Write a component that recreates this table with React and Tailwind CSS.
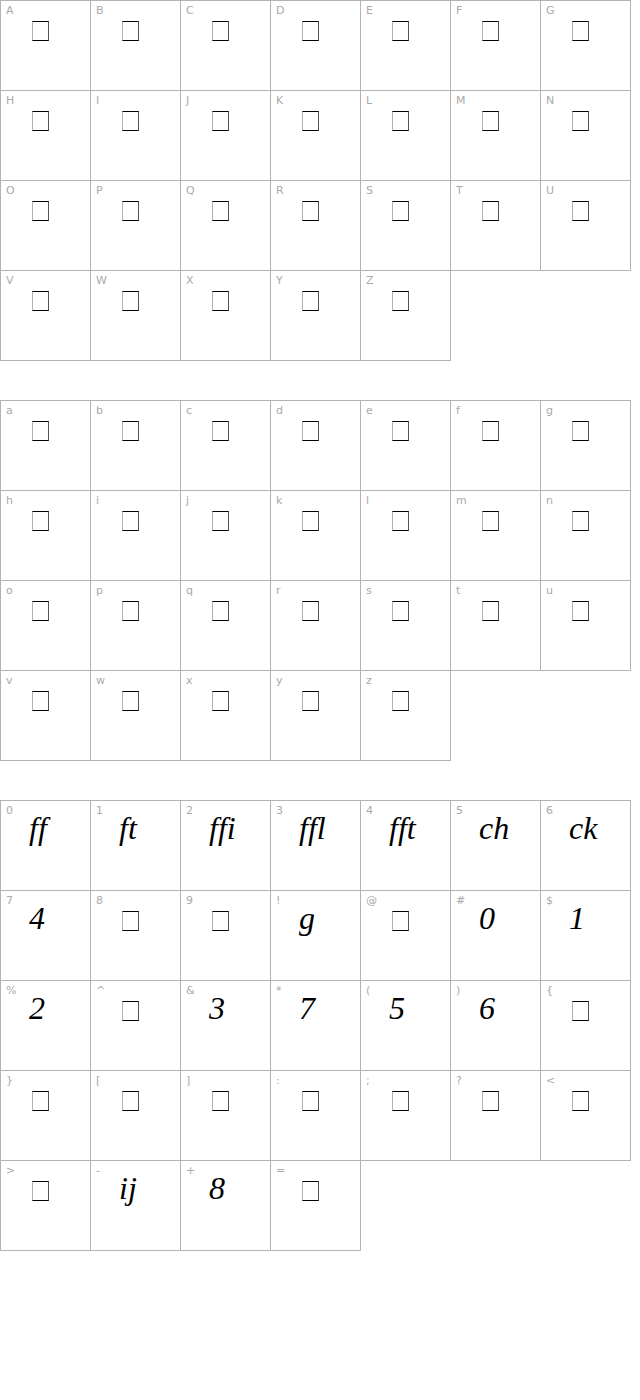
const upper = "ABCDEFGHIJKLMNOPQRSTUVWXYZ".split("").map((c) => [c, null]);
const lower = "abcdefghijklmnopqrstuvwxyz".split("").map((c) => [c, null]);
const other = [
  ["0", "ff"], ["1", "ft"], ["2", "ffi"], ["3", "ffl"], ["4", "fft"], ["5", "ch"], ["6", "ck"],
  ["7", "4"], ["8", null], ["9", null], ["!", "g"], ["@", null], ["#", "0"], ["$", "1"],
  ["%", "2"], ["^", null], ["&", "3"], ["*", "7"], ["(", "5"], [")", "6"], ["{", null],
  ["}", null], ["[", null], ["]", null], [":", null], [";", null], ["?", null], ["<", null],
  [">", null], ["-", "ij"], ["+", "8"], ["=", null],
];

const Cell = ({ label, glyph }) => (
  <div className="w-[91px] h-[91px] border border-[#b3b3b3] bg-white">
    <div className="pl-[5px] pt-[3px] h-[14px] text-[11px] leading-[14px] text-[#aaaaaa] font-['DejaVu_Sans',sans-serif]">
      {label}
    </div>
    {glyph ? (
      <div className="pl-[28px] text-[32px] leading-[26px] italic text-black font-['Liberation_Serif',serif]">
        {glyph}
      </div>
    ) : (
      <div className="flex justify-center pr-[10px] pt-[6px]">
        <div className="w-[17px] h-[20px] border border-black border-l-[#b0b0b0] border-r-[#555555]" />
      </div>
    )}
  </div>
);

const Section = ({ items }) => (
  <div className="grid grid-cols-[repeat(7,90px)] auto-rows-[90px] w-[631px]">
    {items.map(([label, glyph]) => (
      <Cell key={label} label={label} glyph={glyph} />
    ))}
  </div>
);

export default function App() {
  return (
    <div className="w-[640px] min-h-[1400px] bg-white flex flex-col gap-10">
      <Section items={upper} />
      <Section items={lower} />
      <Section items={other} />
    </div>
  );
}
